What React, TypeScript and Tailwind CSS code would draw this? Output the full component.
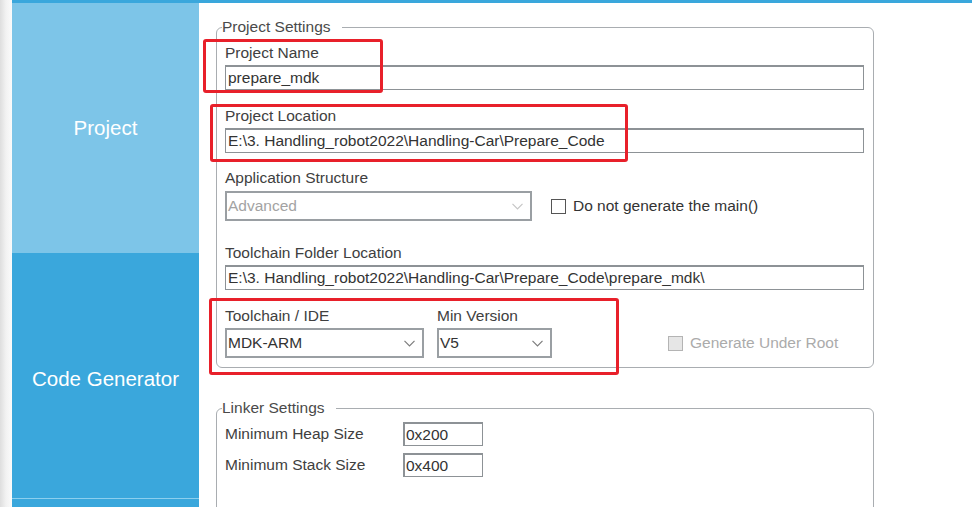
import React from 'react';

const Chevron: React.FC<{ color?: string }> = ({ color = '#7d7d7d' }) => (
  <svg width="11" height="7" viewBox="0 0 11 7" className="shrink-0">
    <polyline points="0.5,0.8 5.5,5.8 10.5,0.8" fill="none" stroke={color} strokeWidth="1.2" />
  </svg>
);

const TextBox: React.FC<{ value: string }> = ({ value }) => (
  <div className="mt-[3px] flex h-[25px] w-[639px] items-center border border-t-2 border-[#8d9296] bg-white pl-[2px] text-[#333]">
    {value}
  </div>
);

const Select: React.FC<{ value: string; width: string; disabled?: boolean }> = ({ value, width, disabled }) => (
  <div
    className={`flex h-[30px] ${width} items-center justify-between border-2 border-[#9a9fa3] bg-white pl-[1px] pr-[7px] ${
      disabled ? 'text-[#a3a3a3]' : 'text-[#333]'
    }`}
  >
    <span>{value}</span>
    <Chevron color={disabled ? '#c6c6c6' : '#7d7d7d'} />
  </div>
);

const Label: React.FC<{ children: React.ReactNode; className?: string }> = ({ children, className = '' }) => (
  <div className={`leading-[18px] text-[#404040] ${className}`}>{children}</div>
);

export default function App() {
  return (
    <div className="flex h-[507px] w-[972px] overflow-hidden bg-white font-['Liberation_Sans',Arial,sans-serif] text-[15.5px]">
      <div className="w-3 shrink-0 bg-gradient-to-r from-[#dedede] via-[#f2f2f2] to-[#fbfbfb]" />
      <div className="flex flex-1 flex-col">
        <div className="h-[3px] shrink-0 bg-[#3aa7dc]" />
        <div className="flex flex-1">
          {/* sidebar */}
          <div className="flex w-[187px] shrink-0 flex-col bg-[#3aa7dc] text-[20.5px] text-white">
            <div className="flex h-[250px] items-center justify-center bg-[#7dc5e8]">Project</div>
            <div className="flex h-[245px] items-center justify-center pt-[7px]">Code Generator</div>
            <div className="h-px bg-[#8ccfee]" />
            <div className="flex-1" />
          </div>

          {/* content */}
          <div className="relative flex-1 pl-[17px] pt-[15px]">
            <fieldset className="w-[658px] rounded-[6px] border border-[#a9adb1] px-[5px] pb-[9px]">
              <legend className="pr-[11px] leading-[18px] text-[#4a4a4a]">Project Settings</legend>
              <div className="pl-[3px]">
                <Label className="mt-[8px]">Project Name</Label>
                <TextBox value="prepare_mdk" />

                <Label className="mt-[17px]">Project Location</Label>
                <TextBox value="E:\3. Handling_robot2022\Handling-Car\Prepare_Code" />

                <Label className="mt-[16px]">Application Structure</Label>
                <div className="mt-[4px] flex items-center gap-[19px]">
                  <Select value="Advanced" width="w-[307px]" disabled />
                  <div className="flex items-center gap-[7px]">
                    <div className="h-[15px] w-[15px] border-[1.5px] border-[#555] bg-white" />
                    <span className="text-[#333]">Do not generate the main()</span>
                  </div>
                </div>

                <Label className="mt-[23px]">Toolchain Folder Location</Label>
                <TextBox value="E:\3. Handling_robot2022\Handling-Car\Prepare_Code\prepare_mdk\" />

                <div className="mt-[17px] flex items-end">
                  <div className="w-[212px]">
                    <Label>Toolchain / IDE</Label>
                    <div className="mt-[3px]">
                      <Select value="MDK-ARM" width="w-[199px]" />
                    </div>
                  </div>
                  <div className="w-[231px]">
                    <Label>Min Version</Label>
                    <div className="mt-[3px]">
                      <Select value="V5" width="w-[115px]" />
                    </div>
                  </div>
                  <div className="flex h-[30px] items-center gap-[7px]">
                    <div className="h-[15px] w-[15px] border border-[#b4b4b4] bg-[#e6e6e6]" />
                    <span className="text-[#ababab]">Generate Under Root</span>
                  </div>
                </div>
              </div>
            </fieldset>

            <fieldset className="mt-[31px] h-[140px] w-[658px] rounded-[6px] border border-[#a9adb1] px-[5px]">
              <legend className="pr-[11px] leading-[18px] text-[#4a4a4a]">Linker Settings</legend>
              <div className="pl-[3px] pt-[5px]">
                <div className="flex items-center">
                  <span className="w-[178px] text-[#404040]">Minimum Heap Size</span>
                  <div className="flex h-[24px] w-[80px] items-center border border-t-2 border-l-2 border-[#8d9296] pl-[1px] text-[#333]">
                    0x200
                  </div>
                </div>
                <div className="mt-[7px] flex items-center">
                  <span className="w-[178px] text-[#404040]">Minimum Stack Size</span>
                  <div className="flex h-[24px] w-[80px] items-center border border-t-2 border-l-2 border-[#8d9296] pl-[1px] text-[#333]">
                    0x400
                  </div>
                </div>
              </div>
            </fieldset>

            {/* red annotation boxes */}
            <div className="pointer-events-none absolute left-[4px] top-[36px] h-[54px] w-[180px] rounded-[3px] border-[3px] border-[#e8202a]" />
            <div className="pointer-events-none absolute left-[11px] top-[101px] h-[58px] w-[418px] rounded-[3px] border-[3px] border-[#e8202a]" />
            <div className="pointer-events-none absolute left-[10px] top-[295px] h-[77px] w-[410px] rounded-[3px] border-[3px] border-[#e8202a]" />
          </div>
        </div>
      </div>
    </div>
  );
}
